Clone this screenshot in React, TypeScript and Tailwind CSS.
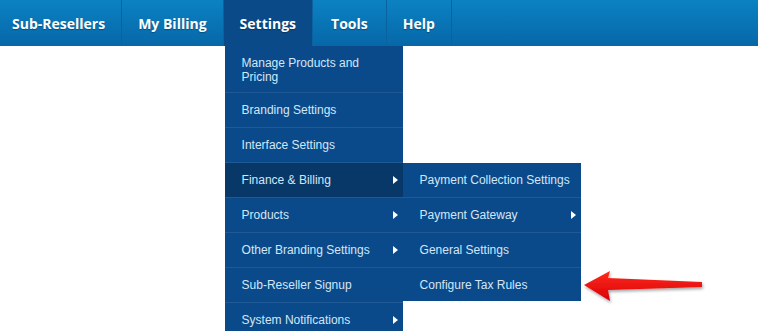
import React from "react";

type Item = { label: string; arrow?: boolean; active?: boolean; tall?: boolean };

const topNav = ["Sub-Resellers", "My Billing", "Settings", "Tools", "Help"];

const settingsMenu: Item[] = [
  { label: "Manage Products and Pricing", tall: true },
  { label: "Branding Settings" },
  { label: "Interface Settings" },
  { label: "Finance & Billing", arrow: true, active: true },
  { label: "Products", arrow: true },
  { label: "Other Branding Settings", arrow: true },
  { label: "Sub-Reseller Signup" },
  { label: "System Notifications", arrow: true },
];

const financeMenu: Item[] = [
  { label: "Payment Collection Settings" },
  { label: "Payment Gateway", arrow: true },
  { label: "General Settings" },
  { label: "Configure Tax Rules" },
];

function Caret() {
  return (
    <svg width="5" height="8" viewBox="0 0 5 8" className="absolute right-[5px] top-1/2 -translate-y-1/2">
      <path d="M0 0L5 4L0 8Z" fill="#ffffff" />
    </svg>
  );
}

function MenuRow({ item, children }: { item: Item; children?: React.ReactNode }) {
  return (
    <div
      className={`relative flex items-center border-b border-[#1f5a97] pl-[17px] pr-[20px] ${
        item.tall ? "h-[47px] pt-[1px] leading-[14px]" : "h-[35px]"
      } ${item.active ? "bg-[#083868]" : ""}`}
    >
      <span className="text-[12px] text-[#d3e6f7]">{item.label}</span>
      {item.arrow && <Caret />}
      {children}
    </div>
  );
}

function RedArrow() {
  return (
    <svg width="130" height="40" viewBox="0 0 130 40" className="absolute left-[578px] top-[266px]">
      <defs>
        <filter id="sh" x="-10%" y="-30%" width="120%" height="160%">
          <feDropShadow dx="1" dy="2" stdDeviation="1.5" floodColor="#000" floodOpacity="0.35" />
        </filter>
        <linearGradient id="rg" x1="0" y1="0" x2="0" y2="1">
          <stop offset="0" stopColor="#ff2a1a" />
          <stop offset="1" stopColor="#d80008" />
        </linearGradient>
      </defs>
      <path
        d="M6 19L32 5L30 12L124 16L124 21L30 24L32 35Z"
        fill="url(#rg)"
        filter="url(#sh)"
      />
    </svg>
  );
}

export default function App() {
  return (
    <div className="relative h-[331px] w-[758px] overflow-hidden bg-white font-['Liberation_Sans',Arial,sans-serif]">
      <nav className="flex h-[46px] bg-gradient-to-b from-[#0b82c3] to-[#0767a8]">
        {topNav.map((label, idx) => {
          const active = label === "Settings";
          return (
            <div
              key={label}
              className={`relative flex h-full items-center border-r border-[#0a639e] font-['Open_Sans',sans-serif] text-[14px] font-bold text-white [text-shadow:0_1px_1px_rgba(0,0,0,0.3)] ${
                idx === 0 ? "pl-[12px] pr-[16px]" : label === "Tools" ? "px-[18px]" : "px-[16px]"
              } ${active ? "bg-[#0b4a89]" : ""}`}
            >
              {label}
              {active && (
                <div className="absolute left-[1px] top-[46px] z-10 w-[178px] bg-[#0b4a8a] font-['Liberation_Sans',Arial,sans-serif] font-normal [text-shadow:none]">
                  {settingsMenu.map((item) => (
                    <MenuRow key={item.label} item={item}>
                      {item.active && (
                        <div className="absolute left-[178px] top-0 w-[178px] bg-[#0b4a8a]">
                          {financeMenu.map((sub, i) => (
                            <div
                              key={sub.label}
                              className={`relative flex items-center pl-[17px] ${
                                i === financeMenu.length - 1 ? "h-[33px]" : "h-[35px] border-b border-[#1f5a97]"
                              }`}
                            >
                              <span className="text-[12px] text-[#d3e6f7]">{sub.label}</span>
                              {sub.arrow && <Caret />}
                            </div>
                          ))}
                        </div>
                      )}
                    </MenuRow>
                  ))}
                </div>
              )}
            </div>
          );
        })}
      </nav>
      <RedArrow />
    </div>
  );
}
